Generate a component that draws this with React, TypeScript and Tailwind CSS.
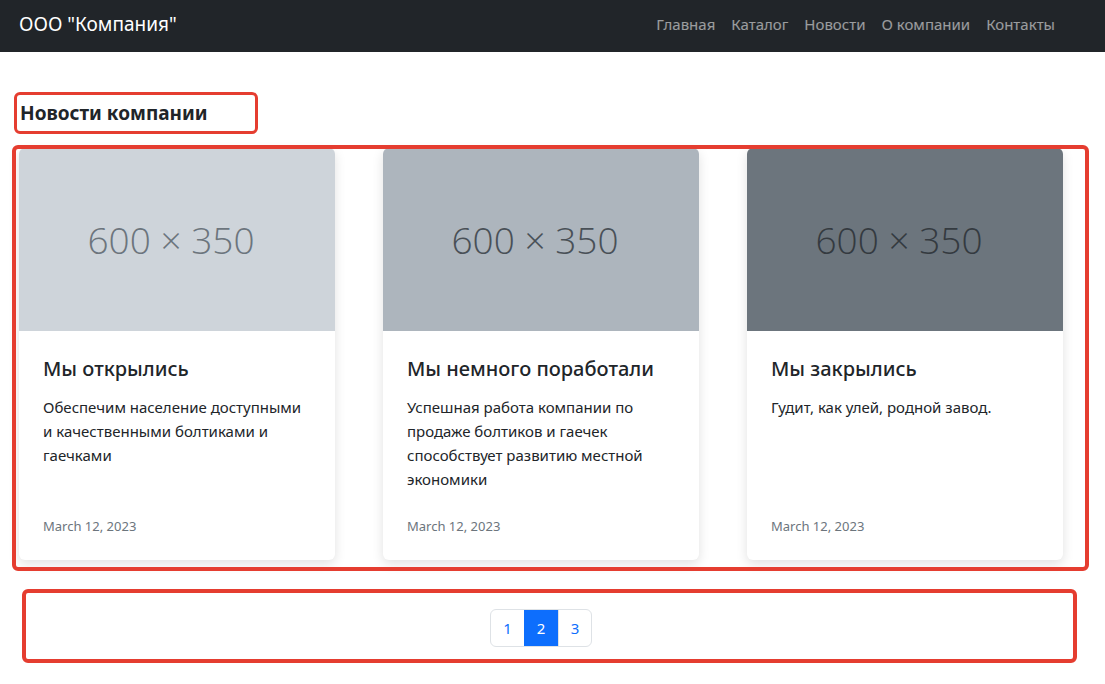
import React from "react"

const links = ["Главная", "Каталог", "Новости", "О компании", "Контакты"]

const news = [
    {
        title: "Мы открылись",
        text: "Обеспечим население доступными и качественными болтиками и гаечками",
        bg: "bg-[#ced4da]",
        fg: "text-[#6c757d]",
    },
    {
        title: "Мы немного поработали",
        text: "Успешная работа компании по продаже болтиков и гаечек способствует развитию местной экономики",
        bg: "bg-[#adb5bd]",
        fg: "text-[#495057]",
    },
    {
        title: "Мы закрылись",
        text: "Гудит, как улей, родной завод.",
        bg: "bg-[#6c757d]",
        fg: "text-[#343a40]",
    },
]

function NewsCard({ title, text, bg, fg }: (typeof news)[number]) {
    return (
        <div className="flex flex-col h-[412px] bg-white rounded-md overflow-hidden shadow-[0_4px_12px_rgba(0,0,0,0.12)]">
            <div className={`h-[183px] flex items-center justify-center pr-3 ${bg}`}>
                <span className={`text-[37px] font-light font-['Open_Sans',sans-serif] ${fg}`}>600 × 350</span>
            </div>
            <div className="flex flex-col flex-1 px-6 pt-[25px] pb-[24px]">
                <h5 className="text-[20px] font-medium text-[#212529] leading-[26px]">{title}</h5>
                <p className="mt-[13px] text-[15px] leading-6 text-[#212529]">{text}</p>
                <div className="mt-auto text-[13px] text-[#6c757d]">March 12, 2023</div>
            </div>
        </div>
    )
}

export default function App() {
    return (
        <div className="relative min-h-[684px] bg-white font-['Noto_Sans',sans-serif]">
            {/* Navbar */}
            <nav className="h-[52px] bg-[#212529] flex items-center justify-between pl-[19px] pr-[50px] pb-[3px]">
                <span className="text-white text-[19px] leading-none">ООО "Компания"</span>
                <div className="flex gap-[16px] text-[15px] text-white/55">
                    {links.map((l) => (
                        <a key={l} href="#" className="hover:text-white/75">
                            {l}
                        </a>
                    ))}
                </div>
            </nav>

            <main className="pl-[19px] pr-[42px]">
                <h2 className="mt-[49px] text-[19px] font-bold text-[#212529] leading-6 pl-[1px]">Новости компании</h2>

                <div className="mt-[23px] grid grid-cols-3 gap-[48px]">
                    {news.map((n) => (
                        <NewsCard key={n.title} {...n} />
                    ))}
                </div>

                {/* Pagination */}
                <div className="mt-[49px] flex justify-center">
                    <div className="flex h-[38px] text-[15px] rounded-md border border-[#dee2e6] overflow-hidden">
                        <a href="#" className="w-[33px] flex items-center justify-center text-[#0d6efd]">1</a>
                        <a href="#" className="w-[34px] flex items-center justify-center bg-[#0d6efd] text-white">2</a>
                        <a href="#" className="w-[33px] flex items-center justify-center text-[#0d6efd] border-l border-[#dee2e6]">3</a>
                    </div>
                </div>
            </main>

            {/* Annotation frames */}
            <div className="absolute left-[14px] top-[92px] w-[244px] h-[42px] border-[3px] border-[#e53d30] rounded-md pointer-events-none" />
            <div className="absolute left-[12px] top-[145px] w-[1077px] h-[426px] border-[4px] border-[#e53d30] rounded-md pointer-events-none" />
            <div className="absolute left-[22px] top-[589px] w-[1055px] h-[74px] border-[4px] border-[#e53d30] rounded-md pointer-events-none" />
        </div>
    )
}
